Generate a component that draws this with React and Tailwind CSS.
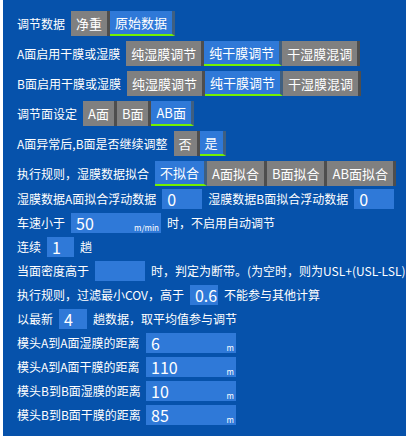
import React from "react";

const font = "font-['Noto_Sans_CJK_SC',sans-serif]";

function Btn({ children, active }) {
  return (
    <span
      className={
        active
          ? "h-[25px] flex items-center px-[5px] text-[13px] leading-none bg-[#2f79d8] border-r-[3px] border-r-[#3f5f80] border-b-2 border-b-[#74f000]"
          : "h-[25px] flex items-center px-[5px] text-[13px] leading-none bg-[#808080] border-r-[3px] border-r-[#4e4e4e]"
      }
    >
      {children}
    </span>
  );
}

function BtnRow({ label, items, active }) {
  return (
    <div className="flex items-center h-[25px] mb-[5px]">
      <span className="mr-[6px]">{label}</span>
      <div className="flex">
        {items.map((it) => (
          <Btn key={it} active={it === active}>
            {it}
          </Btn>
        ))}
      </div>
    </div>
  );
}

function Input({ value, width, unit }) {
  return (
    <div
      className="relative shrink-0 h-[20px] bg-[#2f79d8] flex items-center pl-[5px] mx-[6px] text-[16px] leading-none"
      style={{ width }}
    >
      {value}
      {unit && (
        <span className="absolute right-[2px] bottom-[1px] text-[8px] leading-none">{unit}</span>
      )}
    </div>
  );
}

function Row({ children }) {
  return <div className="flex items-center h-[20px] mb-[4px] whitespace-nowrap">{children}</div>;
}

export default function App() {
  return (
    <div className={`w-[406px] h-[440px] bg-white overflow-hidden ${font}`}>
      <div className="ml-[3px] h-[436px] bg-[#0652ab] text-white text-[12px] leading-none pl-[14px] pt-[11px] overflow-hidden">
        <BtnRow label="调节数据" items={["净重", "原始数据"]} active="原始数据" />
        <BtnRow label="A面启用干膜或湿膜" items={["纯湿膜调节", "纯干膜调节", "干湿膜混调"]} active="纯干膜调节" />
        <BtnRow label="B面启用干膜或湿膜" items={["纯湿膜调节", "纯干膜调节", "干湿膜混调"]} active="纯干膜调节" />
        <BtnRow label="调节面设定" items={["A面", "B面", "AB面"]} active="AB面" />
        <BtnRow label="A面异常后,B面是否继续调整" items={["否", "是"]} active="是" />
        <div className="mb-[-2px]">
          <BtnRow label="执行规则，湿膜数据拟合" items={["不拟合", "A面拟合", "B面拟合", "AB面拟合"]} active="不拟合" />
        </div>

        <Row>
          <span className="shrink-0">湿膜数据A面拟合浮动数据</span>
          <Input value="0" width={40} />
          <span className="shrink-0">湿膜数据B面拟合浮动数据</span>
          <Input value="0" width={40} />
        </Row>
        <Row>
          <span className="shrink-0">车速小于</span>
          <Input value="50" width={90} unit="m/min" />
          <span className="shrink-0">时，不启用自动调节</span>
        </Row>
        <Row>
          <span className="shrink-0">连续</span>
          <Input value="1" width={27} />
          <span className="shrink-0">趟</span>
        </Row>
        <Row>
          <span className="shrink-0">当面密度高于</span>
          <Input value="" width={50} />
          <span className="shrink-0">时，判定为断带。(为空时，则为USL+(USL-LSL)*0.1)</span>
        </Row>
        <Row>
          <span className="shrink-0">执行规则，过滤最小COV，高于</span>
          <Input value="0.6" width={28} />
          <span className="shrink-0">不能参与其他计算</span>
        </Row>
        <Row>
          <span className="shrink-0">以最新</span>
          <Input value="4" width={28} />
          <span className="shrink-0">趟数据，取平均值参与调节</span>
        </Row>
        {[
          ["模头A到A面湿膜的距离", "6"],
          ["模头A到A面干膜的距离", "110"],
          ["模头B到B面湿膜的距离", "10"],
          ["模头B到B面干膜的距离", "85"],
        ].map(([l, v]) => (
          <Row key={l}>
            <span className="w-[123px] shrink-0">{l}</span>
            <Input value={v} width={90} unit="m" />
          </Row>
        ))}
      </div>
    </div>
  );
}
